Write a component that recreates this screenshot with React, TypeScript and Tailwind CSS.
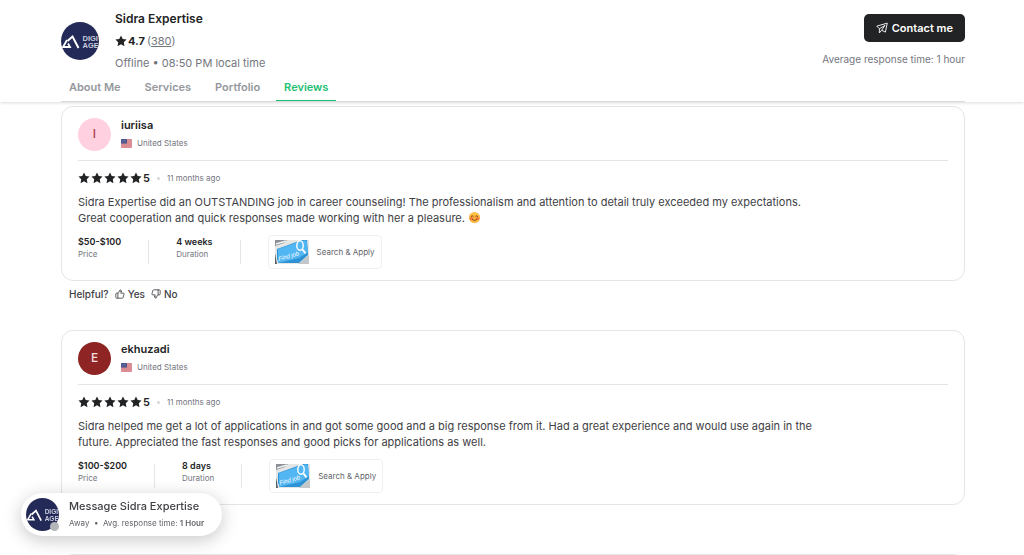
import { ThumbsDown, ThumbsUp } from "lucide-react"

type Review = {
    name: string
    letter: string
    avatarStyle: string
    text: string
    happy?: boolean
    price: string
    duration: string
}

const tabs = ["About Me", "Services", "Portfolio", "Reviews"]

const reviews: Review[] = [
    {
        name: "iuriisa",
        letter: "I",
        avatarStyle: "bg-[#ffd1e0] text-[#b0404a]",
        text: "Sidra Expertise did an OUTSTANDING job in career counseling! The professionalism and attention to detail truly exceeded my expectations. Great cooperation and quick responses made working with her a pleasure.",
        happy: true,
        price: "$50-$100",
        duration: "4 weeks",
    },
    {
        name: "ekhuzadi",
        letter: "E",
        avatarStyle: "bg-[#8e2424] text-[#f5dede]",
        text: "Sidra helped me get a lot of applications in and got some good and a big response from it. Had a great experience and would use again in the future. Appreciated the fast responses and good picks for applications as well.",
        price: "$100-$200",
        duration: "8 days",
    },
]

const StarSvg = () => (
    <svg viewBox="0 0 16 16" className="size-3 shrink-0" fill="#222325" aria-hidden="true">
        <path d="M8 .8l2.300 4.600 5.100.7-3.700 3.600.9 5.200L8 12.400l-4.600 2.500.9-5.200L.6 6.100l5.100-.7z" />
    </svg>
)

const PlaneSvg = () => (
    <svg viewBox="0 0 16 16" className="size-3" fill="none" stroke="#fff" strokeWidth="1.200" strokeLinejoin="round" aria-hidden="true">
        <path d="M15 1.500L1 5.500l3.500 3.500L12 4.500 7.500 11l5 2.500z" />
        <path d="M4.500 9v5.500l3-3.500" />
    </svg>
)

const LogoSvg = ({ className }: { className: string }) => (
    <svg viewBox="0 0 38 38" className={className} role="img" aria-label="Digi Age">
        <defs>
            <clipPath id="logoCircle">
                <circle cx="19" cy="19" r="19" />
            </clipPath>
        </defs>
        <g clipPath="url(#logoCircle)">
            <rect width="38" height="38" fill="#232a57" />
            <path d="M6 18l-4 7h7l-2-3.500" fill="none" stroke="#fff" strokeWidth="1.800" />
            <path d="M6.500 19l5-4.500 6 11.500" fill="none" stroke="#fff" strokeWidth="2" />
            <g fill="#c9cddd" fontFamily="Liberation Sans, sans-serif" fontSize="7.500" fontWeight="bold">
                <text x="21.500" y="18.700">DIGI</text>
                <text x="21.500" y="26.200">AGE</text>
            </g>
        </g>
    </svg>
)

const FlagSvg = () => (
    <svg viewBox="0 0 22 18" className="h-[9px] w-[11px]" aria-hidden="true">
        <rect width="22" height="18" rx="2" fill="#d9828b" />
        <path d="M10 4h12M10 8h12M0 12h22M0 16h22" stroke="#e6a9ae" strokeWidth="1" />
        <rect width="12" height="9" rx="1" fill="#4a5590" />
        <path d="M2 3h8M2 6h8" stroke="#8d95bd" strokeWidth="1" strokeDasharray="1 1" />
    </svg>
)

const HappySvg = () => (
    <svg viewBox="0 0 22 22" className="ml-1 inline-block size-[11px] align-[-1px]" role="img" aria-label="smiling face">
        <circle cx="11" cy="11" r="11" fill="#fbb43c" />
        <path d="M1 8a11 11 0 0 1 20 0C16 4 6 4 1 8z" fill="#fdc94c" />
        <path d="M4 9.500q2.500-4 5 0M13 9.500q2.500-4 5 0" fill="none" stroke="#6b3f14" strokeWidth="1.800" />
        <circle cx="4.500" cy="13" r="3" fill="#f4753c" />
        <circle cx="17.500" cy="13" r="3" fill="#f4753c" />
        <path d="M6 13.500q5 6.500 10 0" fill="none" stroke="#8a3b14" strokeWidth="2" />
    </svg>
)

const FindJobSvg = () => (
    <svg viewBox="0 0 34 24" className="h-6 w-[34px]" role="img" aria-label="Find job key">
        <rect width="34" height="24" fill="#e4e6e6" />
        <path d="M0 0h12l-3 3-9 3z" fill="#8b9095" />
        <path d="M1 4l10-3" stroke="#f2f2f2" strokeWidth="1.500" />
        <path d="M0 13l2 11H0z" fill="#55616b" />
        <path d="M2 9L27 0h5l1 15-9 8H4L2 19z" fill="#2f92d6" />
        <path d="M3 9L27 1q4-2 5 1l1 10-9 6L3 23z" fill="#52b6f2" />
        <path d="M34 15v9H23z" fill="#c3c7c9" />
        <ellipse cx="25" cy="5.500" rx="3.200" ry="4.800" fill="none" stroke="#fff" strokeWidth="1.400" />
        <path d="M27.500 9.500l3 4" stroke="#fff" strokeWidth="2" />
        <text x="4" y="21" transform="rotate(-16 4 21)" fill="#fff" fontFamily="Liberation Sans Narrow, Liberation Sans, sans-serif" fontStyle="italic" fontSize="6">Find job</text>
    </svg>
)

const Header = () => (
    <header className="relative z-10 bg-white pr-[59px] pl-[61px] shadow-[0_1px_3px_rgba(0,0,0,0.14)]">
        <div className="flex justify-between pt-2">
            <div className="flex items-center gap-4">
                <LogoSvg className="size-[38px]" />
                <div>
                    <h1 className="text-xs leading-[22px] font-semibold text-[#222325]">Sidra Expertise</h1>
                    <div className="flex items-center gap-px text-[11px] leading-[22px]">
                        <StarSvg />
                        <span className="font-bold text-[#222325]">4.7</span>
                        <a href="#reviews" className="ml-px text-[#74767e]">(<span className="underline">380</span>)</a>
                    </div>
                    <p className="text-[11px] leading-[22px] text-[#74767e]">Offline • 08:50 PM local time</p>
                </div>
            </div>
            <div className="flex flex-col items-end gap-[11px] pt-[6px]">
                <button type="button" className="flex h-7 items-center gap-1 rounded-[5px] bg-[#222325] px-3 text-[11px] font-semibold text-white">
                    <PlaneSvg />
                    Contact me
                </button>
                <p className="text-[10px] leading-3 text-[#74767e]">Average response time: 1 hour</p>
            </div>
        </div>
        <nav className="flex gap-2 border-b border-[#dadbdd] text-[11px] leading-[26px] font-semibold">
            {tabs.map((tab) => (
                <a
                key={tab}
                href="#reviews"
                className={tab === "Reviews" ? "border-b border-[#1dbf73] px-2 text-[#1dbf73]" : "px-2 text-[#95979d]"}>
                    {tab}
                </a>
            ))}
        </nav>
    </header>
)

const ReviewCard = ({ review }: { review: Review }) => (
    <article className="rounded-xl border border-[#e4e5e7] px-4 pt-[9px] pb-[11px]">
        <div className="flex items-center gap-[10px] border-b border-[#e4e5e7] pb-2">
            <div className={`flex size-[33px] items-center justify-center rounded-full text-xs font-medium ${review.avatarStyle}`}>
                {review.letter}
            </div>
            <div>
                <h2 className="text-[11px] leading-[18px] font-semibold text-[#222325]">{review.name}</h2>
                <div className="flex items-center gap-[5px] text-[8px] leading-[18px] text-[#74767e]">
                    <FlagSvg />
                    United States
                </div>
            </div>
        </div>
        <div className="mt-[9px] flex items-center gap-px text-[11px] leading-4 text-[#222325]">
            <StarSvg /><StarSvg /><StarSvg /><StarSvg /><StarSvg />
            <span className="font-semibold">5</span>
            <span className="mx-[6px] size-[3px] rounded-full bg-[#d5d6d9]"></span>
            <span className="text-[8px] text-[#74767e]">11 months ago</span>
        </div>
        <p className="mt-2 max-w-[740px] text-[11px] leading-4 text-[#404145]">
            {review.text}
            {review.happy && <HappySvg />}
        </p>
        <div className="mt-[9px] flex items-center gap-[27px]">
            <div className="self-start">
                <p className="text-[9px] leading-[13px] font-semibold text-[#222325]">{review.price}</p>
                <p className="text-[8px] leading-[13px] text-[#74767e]">Price</p>
            </div>
            <div className="h-6 w-px bg-[#e4e5e7]"></div>
            <div className="self-start">
                <p className="text-[9px] leading-[13px] font-semibold text-[#222325]">{review.duration}</p>
                <p className="text-[8px] leading-[13px] text-[#74767e]">Duration</p>
            </div>
            <div className="h-6 w-px bg-[#e4e5e7]"></div>
            <a href="#gig" className="flex h-[34px] items-center gap-2 rounded border border-[#f0f0f1] px-[6px] text-[8px] text-[#62646a]">
                <FindJobSvg />
                Search & Apply
            </a>
        </div>
    </article>
)

const Helpful = () => (
    <div className="flex items-center gap-[6px] px-2 pt-1 text-[10px] leading-[18px] font-medium text-[#404145]">
        <span>Helpful?</span>
        <button type="button" className="flex items-center gap-[3px]">
            <ThumbsUp size={10} />
            Yes
        </button>
        <button type="button" className="flex items-center gap-[3px]">
            <ThumbsDown size={10} />
            No
        </button>
    </div>
)

const MessageBubble = () => (
    <button
    type="button"
    className="fixed bottom-[19px] left-[21px] z-20 flex items-center gap-[10px] rounded-full bg-white py-[5px] pr-[18px] pl-[5px] text-left shadow-[0_4px_18px_rgba(0,0,0,0.22)]">
        <span className="relative">
            <LogoSvg className="size-[33px]" />
            <span className="absolute right-0 bottom-0 size-[9px] rounded-full bg-[#b5b6ba]"></span>
        </span>
        <span>
            <span className="block text-[11px] leading-[17px] font-medium text-[#404145]">Message Sidra Expertise</span>
            <span className="block text-[8px] leading-4 text-[#62646a]">
                Away &nbsp;•&nbsp; Avg. response time: <b className="font-semibold">1 Hour</b>
            </span>
        </span>
    </button>
)

export default function App() {
    return (
        <div className="h-screen overflow-hidden bg-white font-['Inter',sans-serif]">
            <Header />
            <main id="reviews" className="flex flex-col gap-[27px] pt-1 pr-[59px] pl-[61px]">
                {reviews.map((review) => (
                    <section key={review.name}>
                        <ReviewCard review={review} />
                        <Helpful />
                    </section>
                ))}
                <section className="h-10 rounded-xl border border-[#e4e5e7]"></section>
            </main>
            <MessageBubble />
        </div>
    )
}
